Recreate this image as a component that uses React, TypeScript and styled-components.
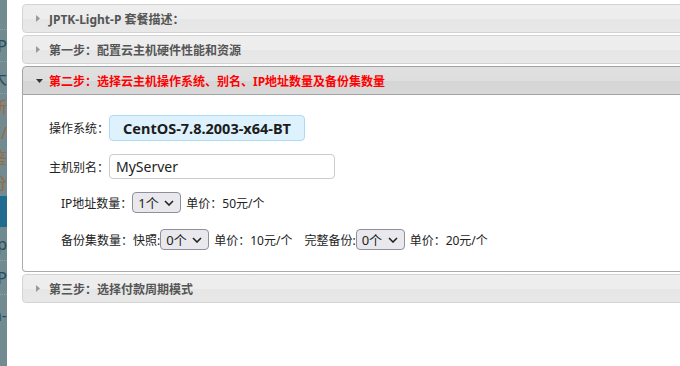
import React from 'react';
import styled, {createGlobalStyle} from 'styled-components';

const GlobalStyle = createGlobalStyle`
  html, body {
    margin: 0;
    padding: 0;
    background: #fff;
    overflow: hidden;
  }
  body {
    font-family: "Noto Sans", "Noto Sans CJK SC", sans-serif;
    font-size: 12px;
    color: #222;
  }
`;

interface StripSlot {
  h: number;
  text?: string;
  color?: string;
  bg?: string;
  line?: boolean;
}

const stripSlots: StripSlot[] = [
  {h: 30, line: true},
  {h: 32, text: 'P', color: '#2c4a5c', line: true},
  {h: 32, text: '大', color: '#2c4a5c', line: true},
  {h: 26, text: '新', color: '#9a6a3a'},
  {h: 26, text: '//', color: '#9a6a3a'},
  {h: 25, text: '鉴', color: '#9a6a3a'},
  {h: 25, text: '1分', color: '#9a6a3a'},
  {h: 31, bg: '#1f6c90'},
  {h: 34, text: 'p', color: '#2c4a5c', line: true},
  {h: 34, text: '-P', color: '#2c4a5c', line: true},
  {h: 40, text: 'n-', color: '#2c4a5c'},
];

const ChevronDown = () => (
  <svg width="10" height="6" viewBox="0 0 10 6">
    <path d="M1 1l4 4 4-4" fill="none" stroke="#222" strokeWidth="1.6" />
  </svg>
);

const SelectBox = ({value, options}: {value: string; options: string[]}) => (
  <SelectWrap>
    <Select defaultValue={value}>
      {options.map((o) => (
        <option key={o}>{o}</option>
      ))}
    </Select>
    <SelectArrow>
      <ChevronDown />
    </SelectArrow>
  </SelectWrap>
);

const Header = ({title, active}: {title: string; active?: boolean}) => (
  <HeaderBar $active={active}>
    <Icon>
      {active ? (
        <svg width="7" height="4" viewBox="0 0 7 4">
          <path d="M0 0h7L3.5 4z" fill="#333" />
        </svg>
      ) : (
        <svg width="4" height="7" viewBox="0 0 4 7">
          <path d="M0 0v7l4-3.5z" fill="#999" />
        </svg>
      )}
    </Icon>
    <HeaderTitle $active={active}>{title}</HeaderTitle>
  </HeaderBar>
);

export default function App() {
  const counts = ['0个', '1个', '2个', '3个'];
  return (
    <>
      <GlobalStyle />
      <Page>
        <Strip>
          {stripSlots.map((s, i) => (
            <Slot key={i} $h={s.h} $bg={s.bg} $color={s.color} $line={s.line}>
              {s.text}
            </Slot>
          ))}
        </Strip>
        <Accordion>
          <Header title="JPTK-Light-P 套餐描述：" />
          <Header title="第一步：配置云主机硬件性能和资源" />
          <Section>
            <Header active title="第二步：选择云主机操作系统、别名、IP地址数量及备份集数量" />
            <Content>
              <Row $top={20}>
                <Label>操作系统：</Label>
                <OsBadge>CentOS-7.8.2003-x64-BT</OsBadge>
              </Row>
              <Row $top={13}>
                <Label>主机别名：</Label>
                <TextInput defaultValue="MyServer" />
              </Row>
              <Row $top={13} $indent>
                <Label>IP地址数量：</Label>
                <SelectBox value="1个" options={counts} />
                <Price>单价：50元/个</Price>
              </Row>
              <Row $top={16} $indent>
                <Label>备份集数量：快照:</Label>
                <SelectBox value="0个" options={counts} />
                <Price>单价：10元/个</Price>
                <Label $spaced>完整备份:</Label>
                <SelectBox value="0个" options={counts} />
                <Price>单价：20元/个</Price>
              </Row>
            </Content>
          </Section>
          <Header title="第三步：选择付款周期模式" />
        </Accordion>
      </Page>
    </>
  );
}

const Page = styled.div`
  display: flex;
  width: 680px;
  height: 366px;
  overflow: hidden;
`;

const Strip = styled.div`
  width: 7px;
  flex-shrink: 0;
  display: flex;
  flex-direction: column;
  background: #718b90;
  overflow: hidden;
`;

const Slot = styled.div<{$h: number; $bg?: string; $color?: string; $line?: boolean}>`
  height: ${(p) => p.$h}px;
  flex-shrink: 0;
  display: flex;
  align-items: center;
  justify-content: flex-end;
  overflow: hidden;
  white-space: nowrap;
  font-size: 16px;
  line-height: 1;
  color: ${(p) => p.$color || 'transparent'};
  background: ${(p) => p.$bg || 'transparent'};
  border-bottom: 1px dotted ${(p) => (p.$line ? '#8ea3a7' : 'transparent')};
  box-sizing: border-box;
`;

const Accordion = styled.div`
  flex-shrink: 0;
  width: 680px;
  margin-left: 15px;
  padding-top: 4px;
  display: flex;
  flex-direction: column;
  gap: 2px;
`;

const Section = styled.div`
  display: flex;
  flex-direction: column;
`;

const HeaderBar = styled.div<{$active?: boolean}>`
  height: 29px;
  box-sizing: border-box;
  display: flex;
  align-items: center;
  padding-left: 13px;
  border: 1px solid ${(p) => (p.$active ? '#a3a3a3' : '#d3d3d3')};
  border-radius: ${(p) => (p.$active ? '4px 4px 0 0' : '4px')};
  background: ${(p) =>
    p.$active
      ? 'linear-gradient(#e0e0e0 0%, #dedede 50%, #d5d5d5 51%, #d8d8d8 100%)'
      : 'linear-gradient(#eeeeee 0%, #ededed 50%, #e6e6e6 51%, #e8e8e8 100%)'};
`;

const Icon = styled.span`
  width: 13px;
  display: flex;
  align-items: center;
`;

const HeaderTitle = styled.span<{$active?: boolean}>`
  font-weight: bold;
  font-size: 12px;
  color: ${(p) => (p.$active ? '#f00' : '#555')};
`;

const Content = styled.div`
  border: 1px solid #aaa;
  border-top: 0;
  border-radius: 0 0 4px 4px;
  background: #fff;
  padding: 0 26px 21px;
  display: flex;
  flex-direction: column;
`;

const Row = styled.div<{$indent?: boolean; $top: number}>`
  display: flex;
  align-items: center;
  margin-top: ${(p) => p.$top}px;
  padding-left: ${(p) => (p.$indent ? '12px' : '0')};
`;

const Label = styled.span<{$spaced?: boolean}>`
  font-size: 12px;
  color: #222;
  white-space: nowrap;
  margin-left: ${(p) => (p.$spaced ? '12px' : '0')};
`;

const Price = styled.span`
  font-size: 12px;
  color: #222;
  margin-left: 5px;
  white-space: nowrap;
`;

const OsBadge = styled.div`
  height: 26px;
  box-sizing: border-box;
  display: flex;
  align-items: center;
  padding: 0 13px;
  background: #def2fd;
  border: 1px solid #addbf3;
  border-radius: 4px;
  font-weight: bold;
  font-size: 14.5px;
  color: #1c1c1c;
`;

const TextInput = styled.input`
  width: 226px;
  height: 25px;
  box-sizing: border-box;
  border: 1px solid #ccc;
  border-radius: 4px;
  padding: 0 6px;
  font-family: "Noto Sans", "Noto Sans CJK SC", sans-serif;
  font-size: 14px;
  color: #222;
  outline: none;
`;

const SelectWrap = styled.span`
  position: relative;
  display: inline-flex;
`;

const Select = styled.select`
  appearance: none;
  width: 49px;
  height: 21px;
  box-sizing: border-box;
  padding: 0 0 0 5px;
  border: 1px solid #8f8f9d;
  border-radius: 4px;
  background: #e9e9ed;
  font-family: "Noto Sans", "Noto Sans CJK SC", sans-serif;
  font-size: 13px;
  color: #222;
  outline: none;
`;

const SelectArrow = styled.span`
  position: absolute;
  right: 7px;
  top: 8px;
  display: flex;
  pointer-events: none;
`;
